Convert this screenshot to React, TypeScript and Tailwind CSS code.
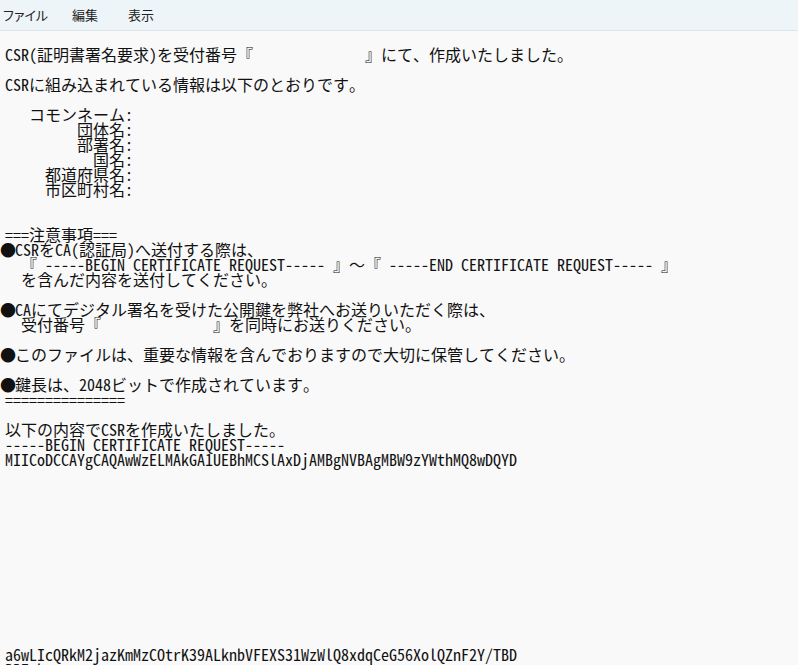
import React from 'react';

const FW = '　'.repeat(7);

const lines: string[] = [
  `CSR(証明書署名要求)を受付番号『${FW}』にて、作成いたしました。`,
  '',
  'CSRに組み込まれている情報は以下のとおりです。',
  '',
  '   コモンネーム:',
  '         団体名:',
  '         部署名:',
  '           国名:',
  '     都道府県名:',
  '     市区町村名:',
  '',
  '',
  '===注意事項===',
  '●CSRをCA(認証局)へ送付する際は、',
  '  『 -----BEGIN CERTIFICATE REQUEST----- 』～『 -----END CERTIFICATE REQUEST----- 』',
  '  を含んだ内容を送付してください。',
  '',
  '●CAにてデジタル署名を受けた公開鍵を弊社へお送りいただく際は、',
  `  受付番号『${FW}』を同時にお送りください。`,
  '',
  '●このファイルは、重要な情報を含んでおりますので大切に保管してください。',
  '',
  '●鍵長は、2048ビットで作成されています。',
  '===============',
  '',
  '以下の内容でCSRを作成いたしました。',
  '-----BEGIN CERTIFICATE REQUEST-----',
  'MIICoDCCAYgCAQAwWzELMAkGA1UEBhMCSlAxDjAMBgNVBAgMBW9zYWthMQ8wDQYD',
  ...Array(12).fill(''),
  'a6wLIcQRkM2jazKmMzCOtrK39ALknbVFEXS31WzWlQ8xdqCeG56XolQZnF2Y/TBD',
  'BBIwkomarsxvuenczwrmaosexuvnrcwzmoaxsrevun',
];

const Line = ({ text }: { text: string }) => {
  if (text.startsWith('●')) {
    return (
      <div className="h-[15px] leading-[15px] whitespace-pre">
        <span className="inline-block w-[15px] -ml-[5px]">●</span>
        {text.slice(1)}
      </div>
    );
  }
  return <div className="h-[15px] leading-[15px] whitespace-pre">{text}</div>;
};

export default function App() {
  return (
    <div className="w-[798px] h-[665px] overflow-hidden bg-[#f9f9f9] flex flex-col">
      <div className="h-[31px] shrink-0 bg-[#eef5f8] border-b border-[#dde4ea] flex items-center pl-[3px] pb-[1px] font-['Noto_Sans_CJK_JP',sans-serif] text-[13px] text-[#222] [font-feature-settings:'palt']">
        <span className="w-[69px]">ファイル</span>
        <span className="w-[56px]">編集</span>
        <span>表示</span>
      </div>
      <div className="pt-[16px] pl-[5px] font-['Noto_Sans_Mono_CJK_JP','Liberation_Mono','Noto_Sans_CJK_JP',monospace] text-[16px] text-[#111]">
        {lines.map((t, i) => (
          <Line key={i} text={t} />
        ))}
      </div>
    </div>
  );
}
